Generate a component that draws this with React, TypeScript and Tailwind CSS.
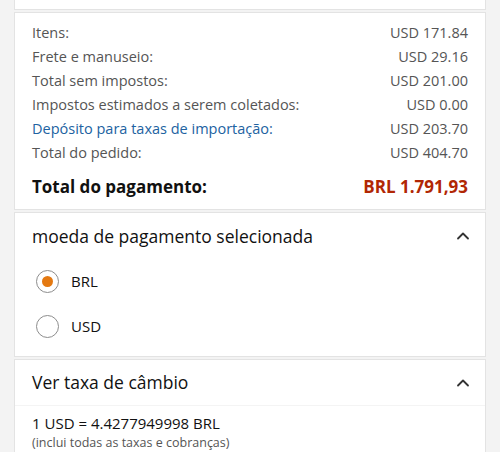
import { ChevronUp } from "lucide-react";

const rows: { label: string; value: string; link?: boolean }[] = [
  { label: "Itens:", value: "USD 171.84" },
  { label: "Frete e manuseio:", value: "USD 29.16" },
  { label: "Total sem impostos:", value: "USD 201.00" },
  { label: "Impostos estimados a serem coletados:", value: "USD 0.00" },
  { label: "Depósito para taxas de importação:", value: "USD 203.70", link: true },
  { label: "Total do pedido:", value: "USD 404.70" },
];

function Radio({ label, checked }: { label: string; checked?: boolean }) {
  return (
    <div className="flex items-center h-[45px] pl-[21px]">
      <span className="flex items-center justify-center w-[23px] h-[23px] rounded-full border border-[#8d8d8d] bg-white">
        {checked && <span className="w-[11px] h-[11px] rounded-full bg-[#e47911]" />}
      </span>
      <span className="ml-[12px] text-[15px] text-[#111]">{label}</span>
    </div>
  );
}

export default function App() {
  return (
    <div
      className="h-[452px] bg-[#f3f3f3] px-[14px] overflow-hidden"
      style={{ fontFamily: '"Open Sans", "Noto Sans", sans-serif' }}
    >
      <div className="flex flex-col gap-[2px] w-[472px]">
        {/* previous card tail */}
        <div className="h-[10px] bg-white border-x border-b border-[#e3e3e3]" />

        {/* order summary */}
        <div className="bg-white border border-[#e3e3e3] pt-[8px] pb-[9px] pl-[17px] pr-[17px]">
          {rows.map((r) => (
            <div key={r.label} className="flex justify-between h-[24px] items-center text-[14.5px]">
              <span className={r.link ? "text-[#2162a1]" : "text-[#555]"}>{r.label}</span>
              <span className="text-[#555]">{r.value}</span>
            </div>
          ))}
          <div className="flex justify-between items-center h-[26px] mt-[9px] text-[17px] font-bold">
            <span className="text-[#111]">Total do pagamento:</span>
            <span className="text-[#b12704]">BRL 1.791,93</span>
          </div>
        </div>

        {/* currency */}
        <div className="bg-white border border-[#e3e3e3] pb-[7px]">
          <div className="flex items-center justify-between h-[46px] pl-[17px] pr-[12px]">
            <span className="text-[17.5px] text-[#111]">moeda de pagamento selecionada</span>
            <ChevronUp className="w-[20px] h-[20px] text-[#333]" strokeWidth={2.2} />
          </div>
          <Radio label="BRL" checked />
          <Radio label="USD" />
        </div>

        {/* exchange rate */}
        <div className="bg-white border border-[#e3e3e3] pb-[10px]">
          <div className="flex items-center justify-between h-[46px] pl-[17px] pr-[12px] border-b border-[#f4f4f4]">
            <span className="text-[17.5px] text-[#111]">Ver taxa de câmbio</span>
            <ChevronUp className="w-[20px] h-[20px] text-[#333]" strokeWidth={2.2} />
          </div>
          <div className="pl-[17px] pt-[6px]">
            <div className="text-[15px] text-[#111] leading-[22px]">1 USD = 4.4277949998 BRL</div>
            <div className="text-[12.5px] text-[#555] leading-[18px]">(inclui todas as taxas e cobranças)</div>
          </div>
        </div>
      </div>
    </div>
  );
}
